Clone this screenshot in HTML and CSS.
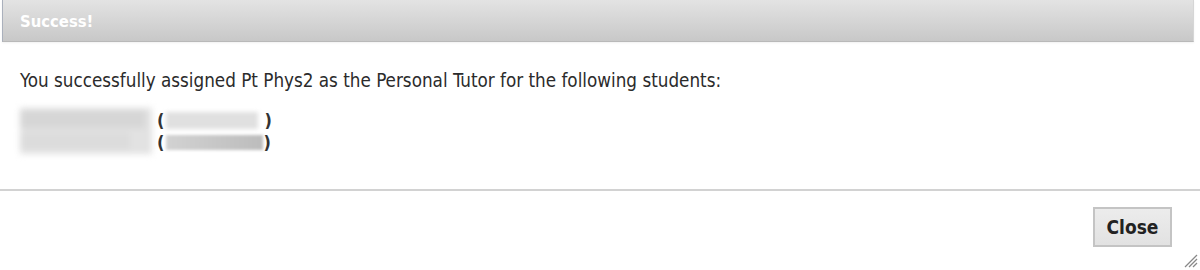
FILE: index.html
```html
<!DOCTYPE html>
<html>
<head>
<meta charset="utf-8">
<link rel="stylesheet" href="styles.css">
</head>
<body>
<div class="dialog">
  <div class="titlebar"><span class="title">Success!</span></div>
  <div class="content">
    <p class="message">You successfully assigned Pt Phys2 as the Personal Tutor for the following students:</p>
    <div class="students">
      <div class="names">
        <span class="blur blur-name1"></span>
        <span class="blur blur-name2"></span>
      </div>
      <div class="ids">
        <div class="id-row"><span class="paren">(</span><span class="blur blur-id1"></span><span class="paren">)</span></div>
        <div class="id-row"><span class="paren">(</span><span class="blur blur-id2"></span><span class="paren">)</span></div>
      </div>
    </div>
  </div>
  <div class="buttonpane">
    <button class="close-btn">Close</button>
  </div>
  <div class="grip">
    <svg width="16" height="16" viewBox="0 0 16 16">
      <line x1="3" y1="15" x2="15" y2="3" stroke="#888" stroke-width="1.2"/>
      <line x1="7" y1="15" x2="15" y2="7" stroke="#888" stroke-width="1.2"/>
      <line x1="11" y1="15" x2="15" y2="11" stroke="#888" stroke-width="1.2"/>
    </svg>
  </div>
</div>
</body>
</html>
```
FILE: styles.css
```css
html, body {
  margin: 0;
  padding: 0;
  background: #ffffff;
}
body {
  width: 1200px;
  height: 270px;
  overflow: hidden;
  font-family: "DejaVu Sans Condensed", "DejaVu Sans", sans-serif;
  font-stretch: condensed;
  color: #2b2b2b;
}
.dialog {
  position: relative;
  width: 1200px;
  height: 270px;
}
.titlebar {
  height: 41px;
  margin-left: 2px;
  margin-right: 6px;
  border-left: 1px solid #aab0bc;
  border-right: 1px solid #d6d6d6;
  border-bottom: 1px solid #b9b9b9;
  background: linear-gradient(#e3e3e3, #c8c8c8);
  display: flex;
  align-items: center;
  padding-left: 17px;
  box-shadow: 0 1px 2px rgba(0,0,0,0.06);
}
.title {
  color: #ffffff;
  font-weight: bold;
  font-size: 16.5px;
  margin-top: 1px;
}
.content {
  padding: 28px 20px 0 20px;
  height: 119px;
  border-bottom: 2px solid #d2d2d2;
}
.message {
  margin: 0;
  font-size: 18.7px;
  line-height: 22px;
}
.students {
  display: flex;
  margin-top: 16px;
  font-size: 18px;
  line-height: 21px;
}
.names {
  display: flex;
  flex-direction: column;
  width: 132px;
  height: 44px;
  background: #e2e2e2;
  filter: blur(3px);
  padding-top: 2px;
}
.blur {
  display: block;
}
.blur-name1 {
  width: 125px;
  height: 18px;
  background: #d6d6d6;
}
.blur-name2 {
  width: 110px;
  height: 16px;
  margin-top: 5px;
  background: #dcdcdc;
}
.ids {
  margin-left: 5px;
  margin-top: 1px;
  font-weight: bold;
}
.id-row {
  display: flex;
  align-items: center;
  height: 22px;
}
.paren {
  color: #333333;
}
.blur-id1 {
  width: 92px;
  height: 17px;
  background: #e0e0e0;
  filter: blur(2px);
  margin: 0 6px 0 2px;
}
.blur-id2 {
  width: 97px;
  height: 15px;
  background: linear-gradient(90deg, #d2d2d2, #bcbcbc);
  filter: blur(1.5px);
  margin: 0 0 0 2px;
}
.buttonpane {
  display: flex;
  justify-content: flex-end;
  padding: 16px 28px 0 0;
}
.close-btn {
  width: 79px;
  height: 40px;
  border: 2px solid #c4c4c4;
  background: linear-gradient(#ececec, #e2e2e2);
  font-family: "DejaVu Sans Condensed", "DejaVu Sans", sans-serif;
  font-stretch: condensed;
  font-weight: bold;
  font-size: 19px;
  color: #222222;
  padding: 0;
}
.grip {
  position: absolute;
  right: 2px;
  bottom: 2px;
  width: 16px;
  height: 16px;
}
```
